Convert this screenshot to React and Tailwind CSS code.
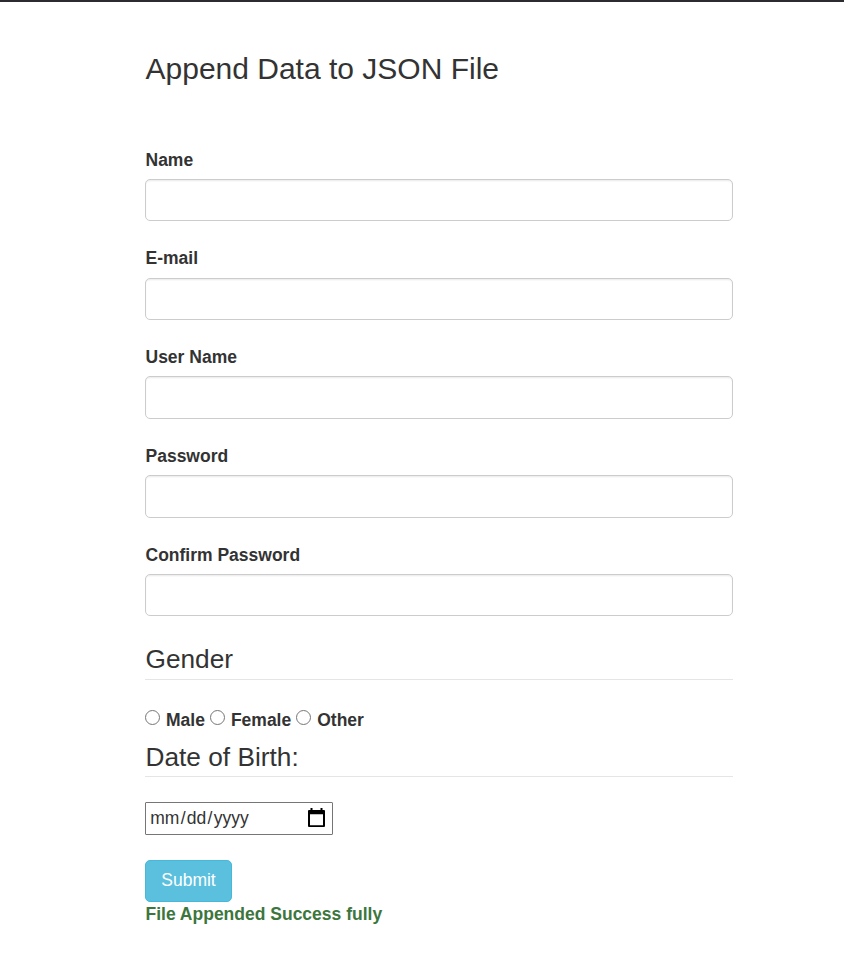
const fields = [
  { label: "Name", type: "text", labelGap: "mt-[61px]", inputBox: "mt-[7px] h-[42px]" },
  { label: "E-mail", type: "email", labelGap: "mt-[25px]", inputBox: "mt-[8px] h-[42px]" },
  { label: "User Name", type: "text", labelGap: "mt-[25px]", inputBox: "mt-[7px] h-[43px]" },
  { label: "Password", type: "password", labelGap: "mt-[25px]", inputBox: "mt-[7px] h-[43px]" },
  { label: "Confirm Password", type: "password", labelGap: "mt-[25px]", inputBox: "mt-[7px] h-[42px]" },
];

export default function App() {
  return (
    <div className="h-[971px] overflow-hidden border-t-2 border-[#2b2b30] bg-white pl-[145px] font-['Liberation_Sans',Arial,sans-serif] text-[17.5px] leading-6 text-[#333]">
      <form className="w-[588px]" onSubmit={(e) => e.preventDefault()}>
        <h3 className="pt-[49px] pl-[0.5px] text-[30px] leading-[36px]">Append Data to JSON File</h3>
        {fields.map((f) => (
          <label key={f.label} className={`block ${f.labelGap}`}>
            <span className="block h-6 pl-[0.5px] font-bold">{f.label}</span>
            <input type={f.type} className={`block w-full rounded-[5px] border border-[#ccc] px-4 shadow-[inset_0_1.25px_1.25px_rgba(0,0,0,0.075)] ${f.inputBox}`} />
          </label>
        ))}
        <h4 className="mt-[25px] h-[39px] border-b border-[#e5e5e5] pl-[0.5px] text-[26.25px] leading-[37px]">Gender</h4>
        <div className="mt-[28px] flex h-6 font-bold">
          {["Male", "Female", "Other"].map((g) => (
            <label key={g} className="mr-[5px] flex">
              <input type="radio" name="gender" className="mt-[2px] mr-[6px] size-[15px] appearance-none rounded-full border border-[#767676]" />
              {g}
            </label>
          ))}
        </div>
        <h4 className="mt-[6px] h-[39px] border-b border-[#e5e5e5] pl-[0.5px] text-[26.25px] leading-[38px]">Date of Birth:</h4>
        <div className="mt-[25px] flex h-[33px] w-[188px] items-center justify-between rounded-[1px] border border-[#767676] pr-[7px] pl-[3px]">
          <span className="flex pb-[2px]">
            <span className="px-[1.25px]">mm</span>/<span className="px-[1.25px]">dd</span>/<span className="px-[1.25px]">yyyy</span>
          </span>
          <svg className="mb-[2px]" width="17" height="19" viewBox="0 0 17 19" fill="#000">
            <path fillRule="evenodd" d="M2.5 0h2v2h8V0h2v2H16a1 1 0 0 1 1 1v15a1 1 0 0 1-1 1H1a1 1 0 0 1-1-1V3a1 1 0 0 1 1-1h1.500zM2 6.200v11h13v-11z" />
          </svg>
        </div>
        <button className="mt-[25px] block h-[42px] w-[87px] rounded-[5px] border border-[#46b8da] bg-[#5bc0de] pb-[2px] text-white">Submit</button>
        <p className="pl-[0.5px] font-bold text-[#3c763d]">File Appended Success fully</p>
      </form>
    </div>
  );
}
